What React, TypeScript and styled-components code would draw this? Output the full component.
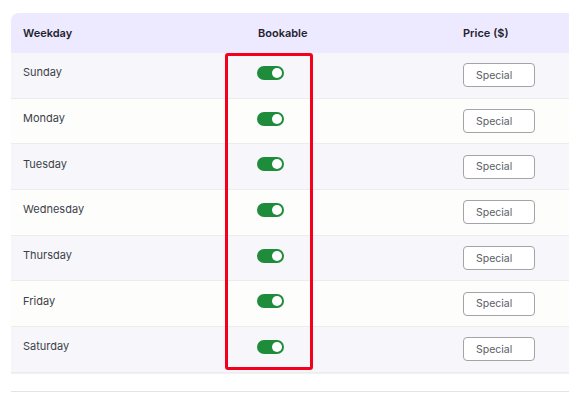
import React from 'react';
import styled, { createGlobalStyle } from 'styled-components';

const GlobalStyle = createGlobalStyle`
  html, body {
    margin: 0;
    padding: 0;
    background: #ffffff;
    overflow: hidden;
  }
  body {
    font-family: Inter, 'Noto Sans', sans-serif;
    width: 569px;
    height: 395px;
  }
`;

const days = ['Sunday', 'Monday', 'Tuesday', 'Wednesday', 'Thursday', 'Friday', 'Saturday'];

const App = () => {
    return (
        <>
            <GlobalStyle />
            <Page>
                <Table>
                    <HeadRow>
                        <HeadCell>Weekday</HeadCell>
                        <HeadCell>Bookable</HeadCell>
                        <HeadCell>Price ($)</HeadCell>
                    </HeadRow>
                    {days.map((day, idx) => (
                        <Row key={day} striped={idx % 2 === 0}>
                            <DayCell>{day}</DayCell>
                            <ToggleCell>
                                <Toggle>
                                    <Knob />
                                </Toggle>
                            </ToggleCell>
                            <PriceCell>
                                <PriceInput>
                                    <Placeholder>Special</Placeholder>
                                </PriceInput>
                            </PriceCell>
                        </Row>
                    ))}
                    {/* annotation box around the bookable column */}
                    <Highlight />
                </Table>
                <Divider />
            </Page>
        </>
    );
};

export default App;

const Page = styled.div`
    padding: 13px 0 0 11px;
    width: 558px;
`;

const Table = styled.div`
    position: relative;
    border-radius: 8px 0 0 0;
    box-shadow: 0 1px 1px rgba(0, 0, 0, 0.06);
`;

const HeadRow = styled.div`
    display: grid;
    grid-template-columns: 235px 205px 1fr;
    align-items: center;
    height: 40px;
    background: #ede9fe;
    border-radius: 8px 0 0 0;
`;

const HeadCell = styled.div`
    padding-left: 12px;
    font-size: 11px;
    font-weight: 600;
    color: #1f2330;
`;

const Row = styled.div<{ striped: boolean }>`
    display: grid;
    grid-template-columns: 235px 205px 1fr;
    align-items: center;
    height: 44.7px;
    border-bottom: 1px solid #ececef;
    background: ${p => (p.striped ? '#f7f7fb' : '#fdfdfc')};
`;

const DayCell = styled.div`
    padding-left: 12px;
    padding-bottom: 6px;
    font-size: 11px;
    color: #3c3f4a;
`;

const ToggleCell = styled.div`
    padding-left: 11px;
    padding-bottom: 5px;
    display: flex;
`;

const Toggle = styled.div`
    width: 27px;
    height: 14px;
    border-radius: 7px;
    background: #1e8c3a;
    display: flex;
    align-items: center;
    justify-content: flex-end;
    padding-right: 2px;
    box-sizing: border-box;
`;

const Knob = styled.div`
    width: 10px;
    height: 10px;
    border-radius: 50%;
    background: #ffffff;
`;

const PriceCell = styled.div`
    padding-left: 12px;
    display: flex;
`;

const PriceInput = styled.div`
    width: 72px;
    height: 24px;
    box-sizing: border-box;
    border: 1px solid #a3a3a8;
    border-radius: 4px;
    background: #ffffff;
    display: flex;
    align-items: center;
    padding-left: 12px;
`;

const Placeholder = styled.span`
    white-space: nowrap;
    font-size: 10.5px;
    color: #5a5d66;
`;

const Highlight = styled.div`
    position: absolute;
    left: 214px;
    top: 40px;
    width: 88px;
    height: 317px;
    box-sizing: border-box;
    border: 3px solid #f5001c;
    border-radius: 3px;
    pointer-events: none;
`;

const Divider = styled.div`
    margin-top: 18px;
    height: 1px;
    background: #e4e4e7;
`;
